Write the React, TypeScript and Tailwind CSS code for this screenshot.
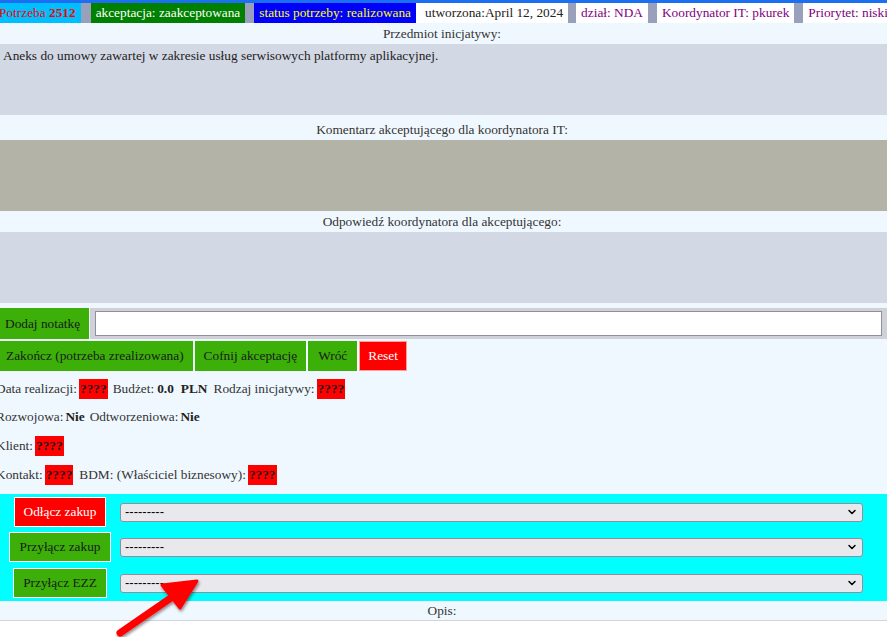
import { ChevronDown } from "lucide-react";

const serif = "font-['Liberation_Serif',serif]";

function Badge({ children }: { children: React.ReactNode }) {
  return (
    <span className="bg-[#ff0000] text-[#2a1a1a] font-bold h-[20px] px-px flex items-center">
      {children}
    </span>
  );
}

function FakeSelect() {
  return (
    <div className="flex-1 h-[19px] bg-[#e9e8ed] border border-[#8f8f9d] rounded-[3px] flex items-center justify-between pl-[4px] pr-[4px] font-['Liberation_Sans',sans-serif] text-[13px] text-black">
      <span>---------</span>
      <ChevronDown className="w-[12px] h-[12px]" strokeWidth={3} />
    </div>
  );
}

export default function App() {
  const headerItems = [
    { label: "utworzona:April 12, 2024", cls: "bg-white text-[#222] pl-[9px] pr-[5px] mr-[8px]" },
    { label: "dział: NDA", cls: "bg-white text-[#800080] px-[5px] mr-[9px]" },
    { label: "Koordynator IT: pkurek", cls: "bg-white text-[#800080] px-[5px] mr-[9px]" },
    { label: "Priorytet: niski", cls: "bg-white text-[#800080] px-[5px] shrink-0" },
  ];

  return (
    <div className={`relative w-full h-[637px] overflow-hidden bg-white ${serif} text-[13.33px]`}>
      <div className="-ml-[3px] w-[calc(100%+3px)]">
        {/* top strip */}
        <div className="h-[3px] bg-[#1d6ff2]" />

        {/* header badges */}
        <div className="h-[20px] bg-[#98a0bc] flex items-stretch whitespace-nowrap overflow-hidden leading-[20px]">
          <span className="bg-[#00bfff] text-[#f00] pl-[2px] pr-[5px] mr-[10px]">
            Potrzeba <b>2512</b>
          </span>
          <span className="bg-[#008000] text-white px-[5px] mr-[9px]">akceptacja: zaakceptowana</span>
          <span className="bg-[#0000ff] text-[#ffff00] px-[5px]">status potrzeby: realizowana</span>
          {headerItems.map((h) => (
            <span key={h.label} className={h.cls}>
              {h.label}
            </span>
          ))}
        </div>

        <div className="bg-[#f0f8ff] text-[#333]">
          {/* Przedmiot */}
          <div className="h-[21px] flex items-center justify-center">Przedmiot inicjatywy:</div>
          <div className="h-[71px] bg-[#d3d8e5] pl-[6px] pt-[2px] text-[#222]">
            Aneks do umowy zawartej w zakresie usług serwisowych platformy aplikacyjnej.
          </div>

          {/* Komentarz */}
          <div className="h-[25px] flex items-end justify-center">
            Komentarz akceptującego dla koordynatora IT:
          </div>
          <div className="h-[71px] bg-[#b3b3a7]" />

          {/* Odpowiedź */}
          <div className="h-[21px] flex items-center justify-center">
            Odpowiedź koordynatora dla akceptującego:
          </div>
          <div className="h-[71px] bg-[#d3d8e5]" />

          {/* notatka */}
          <div className="mt-[5px] h-[31px] bg-[#cfd0d8] flex items-center pr-[5px] gap-[5px]">
            <button className="h-full pl-[8px] pr-[9px] bg-[#3caf08] text-[#1a1a1a] border-r border-[#eef5fe]">
              Dodaj notatkę
            </button>
            <input className="flex-1 h-[25px] bg-white border border-[#8f8f9d] outline-none" />
          </div>

          {/* action buttons */}
          <div className="mt-[2px] h-[30px] flex gap-[2px]">
            <button className="px-[9px] bg-[#3caf08] text-[#1a1a1a]">Zakończ (potrzeba zrealizowana)</button>
            <button className="px-[9px] bg-[#3caf08] text-[#1a1a1a]">Cofnij akceptację</button>
            <button className="px-[10px] bg-[#3caf08] text-[#1a1a1a]">Wróć</button>
            <button className="px-[8px] bg-[#ff0000] text-white border border-[#ff9c9c]">Reset</button>
          </div>

          {/* info rows */}
          <div className="pt-[3px] pb-[5px] -ml-[1px]">
            <div className="h-[29px] flex items-center whitespace-nowrap">
              <span className="mr-[2px]">Data realizacji:</span>
              <Badge>????</Badge>
              <span className="ml-[5px] mr-[3px]">Budżet:</span>
              <b className="text-[#222]">0.0</b>
              <b className="ml-[7px] text-[#222]">PLN</b>
              <span className="ml-[6px] mr-[2px]">Rodzaj inicjatywy:</span>
              <Badge>????</Badge>
            </div>
            <div className="h-[28px] flex items-center whitespace-nowrap">
              <span className="mr-[2px]">Rozwojowa:</span>
              <b className="text-[#222]">Nie</b>
              <span className="ml-[5px] mr-[2px]">Odtworzeniowa:</span>
              <b className="text-[#222]">Nie</b>
            </div>
            <div className="h-[29px] flex items-center whitespace-nowrap">
              <span className="mr-[2px]">Klient:</span>
              <Badge>????</Badge>
            </div>
            <div className="h-[29px] flex items-center whitespace-nowrap">
              <span className="mr-[2px]">Kontakt:</span>
              <Badge>????</Badge>
              <span className="ml-[6px] mr-[2px]">BDM: (Właściciel biznesowy):</span>
              <Badge>????</Badge>
            </div>
          </div>

          {/* zakup section */}
          <div className="bg-[#00ffff] h-[107px] pl-[3px] pr-[24px] pt-[3px] flex flex-col">
            <div className="h-[30px] flex items-center">
              <div className="w-[120px] flex justify-center">
                <button className="h-[30px] px-[9px] bg-[#ff0000] text-white border border-white">Odłącz zakup</button>
              </div>
              <FakeSelect />
            </div>
            <div className="mt-[5px] h-[30px] flex items-center">
              <div className="w-[120px] flex justify-center">
                <button className="h-[30px] px-[9px] bg-[#3caf08] text-[#1a1a1a] border border-white">Przyłącz zakup</button>
              </div>
              <FakeSelect />
            </div>
            <div className="mt-[6px] h-[30px] flex items-center">
              <div className="w-[120px] flex justify-center">
                <button className="h-[30px] px-[9px] bg-[#3caf08] text-[#1a1a1a] border border-white">Przyłącz EZZ</button>
              </div>
              <FakeSelect />
            </div>
          </div>

          {/* Opis */}
          <div className="h-[20px] flex items-center justify-center border-b border-[#d0d4dc]">Opis:</div>
        </div>
      </div>

      {/* annotation arrow */}
      <svg className="absolute left-[100px] top-[565px] pointer-events-none" width="120" height="80" viewBox="0 0 120 80">
        <defs>
          <filter id="sh" x="-20%" y="-20%" width="140%" height="140%">
            <feDropShadow dx="1" dy="2" stdDeviation="1.5" floodColor="#000" floodOpacity="0.45" />
          </filter>
        </defs>
        <g filter="url(#sh)" fill="#ff0000" stroke="#ff0000" strokeLinejoin="round" strokeLinecap="round">
          <line x1="20" y1="68" x2="78" y2="28" strokeWidth="7" />
          <polygon points="97,16 62,20 80,43" strokeWidth="3" />
        </g>
      </svg>
    </div>
  );
}
